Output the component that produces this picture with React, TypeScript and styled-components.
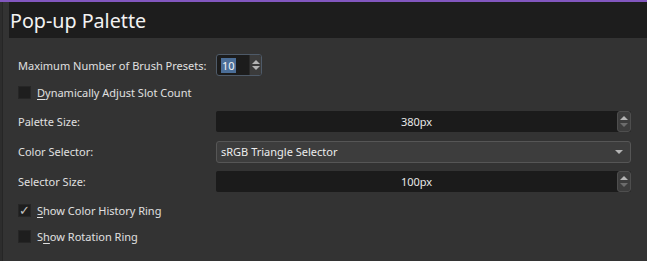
import styled, { createGlobalStyle } from 'styled-components'

const GlobalStyle = createGlobalStyle`
  html, body {
    margin: 0;
    padding: 0;
    background: #333333;
  }
  body {
    font-family: 'Noto Sans', 'Open Sans', sans-serif;
    font-size: 11px;
    color: #e0e0e0;
  }
`

const Page = styled.div`
  width: 647px;
  height: 261px;
  display: flex;
  flex-direction: column;
  overflow: hidden;
  background: #333333;
`

const AccentBar = styled.div`
  height: 2px;
  background: #8257bf;
`

const Body = styled.div`
  flex: 1;
  display: flex;
`

const Gutter = styled.div`
  width: 9px;
  display: flex;

  &::before {
    content: '';
    width: 2px;
    background: #2d2d2d;
  }

  &::after {
    content: '';
    width: 1px;
    background: #262626;
  }
`

const Main = styled.div`
  flex: 1;
  display: flex;
  flex-direction: column;
`

const TitleBar = styled.div`
  height: 36px;
  background: #1d1d1d;
  display: flex;
  align-items: center;
  padding-left: 1px;

  h1 {
    margin: 0;
    font-size: 19.7px;
    font-weight: 400;
    color: #f2f2f2;
  }
`

const Form = styled.div`
  display: grid;
  grid-template-columns: 198px 1fr;
  padding: 16px 16px 0 9px;
  align-items: center;
`

const Label = styled.span`
  color: #e0e0e0;
  white-space: nowrap;
`

const Row = styled.div<{ $h: number; $span?: boolean }>`
  height: ${(p) => p.$h}px;
  display: flex;
  align-items: center;
  gap: 6px;
  ${(p) => (p.$span ? 'grid-column: 1 / 3;' : '')}
`

const SpinBox = styled.div`
  width: 40px;
  height: 20px;
  border: 1px solid #4e5a68;
  border-radius: 3px;
  background: #1c1c1c;
  display: flex;
  align-items: center;
  padding-left: 4px;

  .value {
    background: #4b6e98;
    color: #f4f4f4;
    height: 15px;
    line-height: 15px;
    padding: 0 1px;
  }

  .fill {
    flex: 1;
  }
`

const Arrows = styled.div<{ $w: number }>`
  width: ${(p) => p.$w}px;
  align-self: stretch;
  background: #3b3b3b;
  border-left: 1px solid #2a2a2a;
  border-radius: 0 2px 2px 0;
  display: flex;
  flex-direction: column;
  align-items: center;
  justify-content: center;
  gap: 2px;
`

const Tri = styled.span<{ $up?: boolean; $dim?: boolean }>`
  width: 0;
  height: 0;
  border-left: 4px solid transparent;
  border-right: 4px solid transparent;
  ${(p) =>
    p.$up
      ? `border-bottom: 4px solid ${p.$dim ? '#6c6c6c' : '#b4b4b4'};`
      : `border-top: 4px solid ${p.$dim ? '#6c6c6c' : '#b4b4b4'};`}
`

const CheckBox = styled.span`
  width: 13px;
  height: 13px;
  box-sizing: border-box;
  background: #1e1e1e;
  border: 1px solid #262626;
  display: inline-flex;
  align-items: center;
  justify-content: center;
  color: #c4c4c4;
  font-size: 13px;
  line-height: 1;
  overflow: visible;
`

const CheckLabel = styled.span`
  u {
    text-decoration: underline;
    text-underline-offset: 2px;
  }
`

const Slider = styled.div`
  height: 21px;
  display: flex;
  background: #1b1b1b;
  border-radius: 2px;

  .text {
    flex: 1;
    display: flex;
    align-items: center;
    justify-content: center;
    color: #e8e8e8;
  }
`

const SliderArrows = styled.div`
  width: 12px;
  background: #3c3c3c;
  border: 1px solid #4e4e4e;
  border-radius: 3px;
  display: flex;
  flex-direction: column;
  align-items: center;
  justify-content: center;
  gap: 3px;
`

const Combo = styled.div`
  height: 20px;
  box-sizing: content-box;
  border: 1px solid #565656;
  border-radius: 3px;
  background: #3d3d3d;
  display: flex;
  align-items: center;
  justify-content: space-between;
  padding: 0 7px 0 4px;
  color: #ececec;
`

const SliderField = ({ value }: { value: string }) => (
  <Slider>
    <div className="text">{value}</div>
    <SliderArrows>
      <Tri $up />
      <Tri $dim />
    </SliderArrows>
  </Slider>
)

const App = () => {
  return (
    <>
      <GlobalStyle />
      <Page>
        <AccentBar />
        <Body>
          <Gutter />
          <Main>
            <TitleBar>
              <h1>Pop-up Palette</h1>
            </TitleBar>
            <Form>
              <Row $h={22}>
                <Label>Maximum Number of Brush Presets:</Label>
              </Row>
              <Row $h={22}>
                <SpinBox>
                  <span className="value">10</span>
                  <span className="fill" />
                  <Arrows $w={11}>
                    <Tri $up />
                    <Tri />
                  </Arrows>
                </SpinBox>
              </Row>
              <Row $h={32} $span>
                <CheckBox />
                <CheckLabel>
                  <u>D</u>ynamically Adjust Slot Count
                </CheckLabel>
              </Row>
              <Row $h={27}>
                <Label>Palette Size:</Label>
              </Row>
              <SliderField value="380px" />
              <Row $h={33}>
                <Label>Color Selector:</Label>
              </Row>
              <Combo>
                <span>sRGB Triangle Selector</span>
                <Tri />
              </Combo>
              <Row $h={26}>
                <Label>Selector Size:</Label>
              </Row>
              <SliderField value="100px" />
              <Row $h={32} $span>
                <CheckBox>✓</CheckBox>
                <CheckLabel>
                  <u>S</u>how Color History Ring
                </CheckLabel>
              </Row>
              <Row $h={20} $span>
                <CheckBox />
                <CheckLabel>
                  S<u>h</u>ow Rotation Ring
                </CheckLabel>
              </Row>
            </Form>
          </Main>
        </Body>
      </Page>
    </>
  )
}

export default App
